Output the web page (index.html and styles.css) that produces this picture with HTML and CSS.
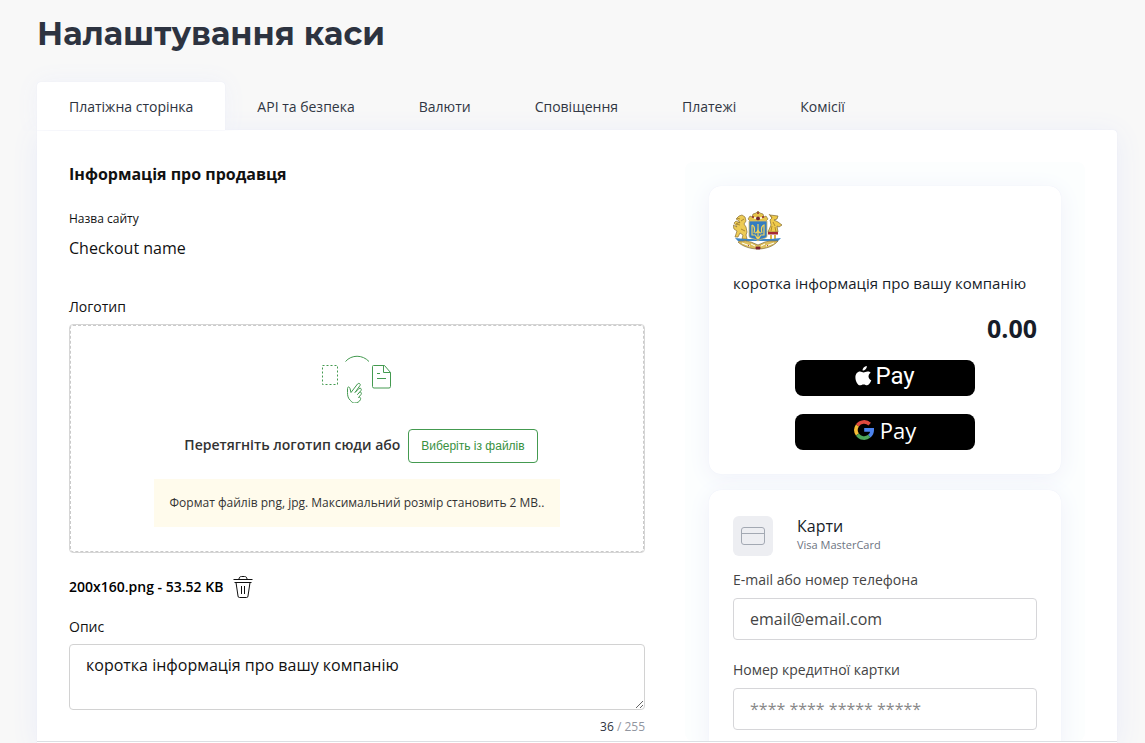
FILE: index.html
```html
<!DOCTYPE html>
<html lang="uk">
<head>
<meta charset="utf-8">
<meta name="viewport" content="width=device-width, initial-scale=1">
<title>Налаштування каси</title>
<link rel="stylesheet" href="styles.css">
</head>
<body>
<main class="page">
  <h1 class="page-title">Налаштування каси</h1>
  <nav class="tabs">
    <a class="tab tab-active" href="#page">Платіжна сторінка</a>
    <a class="tab" href="#api">API та безпека</a>
    <a class="tab" href="#currencies">Валюти</a>
    <a class="tab" href="#notifications">Сповіщення</a>
    <a class="tab" href="#payments">Платежі</a>
    <a class="tab" href="#fees">Комісії</a>
  </nav>
  <div class="panel">
    <div class="panel-body">
      <section class="settings">
        <h2 class="section-title">Інформація про продавця</h2>
        <div class="site-label">Назва сайту</div>
        <div class="site-name">Checkout name</div>
        <div class="field-label logo-label">Логотип</div>
        <div class="dropzone">
          <svg class="drop-icon" width="72" height="48" viewBox="0 0 72 48" fill="none" stroke="#449a50">
            <path d="M1.500 10.500h15v19h-15z" stroke-dasharray="2 2"/>
            <path d="M24.500 6.500c6-7 17-7 23.500 0"/>
            <path d="M52.500 10.500h11l6 7v14a1.500 1.500 0 0 1-1.500 1.500H53a1.500 1.500 0 0 1-1.500-1.500v-20a1 1 0 0 1 1-1z"/>
            <path d="M62.500 10.500v7h7M56 18.500h3M56 23.500h9"/>
            <path d="M29.500 45.500c-2.500-2-3-5-3-8v-4c0-2 2-2 2.500 0l1 4 6.500-8.500c1.500-1.500 3.500 0 2.500 1.500l-5 7 4-4c1.500-1 3 .5 2 2l-3.500 4 2-2c1.500-1 2.500.5 1.500 2l-2.500 3c1.500-1 2.500.5 2 2-1 2.500-3.500 3.500-6 3.500-1.500 0-3-1-4-2.500z"/>
          </svg>
          <div class="drop-row">
            <span class="drop-text">Перетягніть логотип сюди або</span>
            <button class="pick-button" type="button">Виберіть із файлів</button>
          </div>
          <p class="notice">Формат файлів png, jpg. Максимальний розмір становить 2 MB..</p>
        </div>
        <div class="file-row">
          <span>200x160.png - 53.52 KB</span>
          <button class="delete-button" type="button" aria-label="Видалити">
            <svg width="20" height="24" viewBox="0 0 20 24" fill="none" stroke="#111">
              <path d="M.5 4.500h19M6 4.500V4c0-1.500 1-2.500 2.500-2.500h3c1.500 0 2.500 1 2.500 2.500v.5M1.500 7.500h17M3 7.500L5 21a1.500 1.500 0 0 0 1.500 1.500h7A1.500 1.500 0 0 0 15 21l2-13.500M8.500 11v8M11.500 11v8"/>
            </svg>
          </button>
        </div>
        <label class="field-label" for="description">Опис</label>
        <textarea class="description" id="description">коротка інформація про вашу компанію</textarea>
        <div class="counter"><b>36</b> / 255</div>
      </section>

      <aside class="preview">
        <div class="card">
          <svg class="emblem" width="50" height="40" viewBox="0 0 50 40">
            <path d="M15 9l2-3 2 1 1-3 3-1 2-2 2 2 3 1 1 3 2-1 2 3-3 3H18z" fill="#e5c34a" stroke="#806a36" stroke-width=".6"/>
            <path d="M19 7h2M29 7h2M24 3h2" stroke="#8b2630" stroke-width="1.500"/>
            <path d="M21 8h8" stroke="#fff" stroke-width="1.500"/>
            <circle cx="25" cy="8.500" r="2" fill="#6f2430"/>
            <path d="M6 6l3-1 3 2 1 4-2 3 2 3 1 5-1 3 1 4H9l1-4-3-2-2 4H2l2-6-3-2-1-4 4 2-3-4 2-2 4 2-2-3-2-1z" fill="#edcb55" stroke="#89713a" stroke-width=".7"/>
            <path d="M4 8l3 1M7 12l-4 2 4 1M8 19l4 2M11 9l-3 2" stroke="#9b792b" fill="none" stroke-width=".8"/>
            <path d="M37 5l8 1-1 3-3 1 4 2 4 3-3 2-2-1 1 6H35l3-7-1-5 2-2z" fill="#efca4a" stroke="#806a36" stroke-width=".7"/>
            <path d="M36 4l3 4M40 12l2 4M39 16l-1 5M42 17l1 5" fill="none" stroke="#a07827" stroke-width=".8"/>
            <path d="M35 22h10v2.500H35z" fill="#a52934"/>
            <path d="M37 25h2v4h-2zM41 25h2v4h-2z" fill="#d9b546"/>
            <path d="M2 28l10 1h26l10-1-3 3H5z" fill="#3b86c8"/>
            <path d="M5 32c3-2 4 0 6-1s4 1 7 1l7 3 7-3 5-1 8 0c-4 5-12 8-20 8S9 36 5 32z" fill="#ddbf5b" stroke="#7f6b3e" stroke-width=".7"/>
            <path d="M9 33l8 3M41 33l-8 3M18 34l4 2M32 34l-4 2" stroke="#fff" fill="none"/>
            <path d="M23 37h4v2h-4zM15 35.500h1M34 35.500h1" fill="#7d2030" stroke="#7d2030" stroke-width=".8"/>
            <path d="M16 11h18v15c0 3-6 2-9 5-3-3-9-2-9-5z" fill="#347cc0" stroke="#d9bc65" stroke-width=".8"/>
            <path d="M19 15v10h3c1 0 1 3 3 4 2-1 2-4 3-4h3V15c-3 1-3 4-2 8M19 15c3 1 3 4 2 8M25 14v14M22 23c2 0 3-2 3-5 0 3 1 5 3 5" fill="none" stroke="#f2d25a" stroke-width="1.200"/>
          </svg>
          <p class="company">коротка інформація про вашу компанію</p>
          <div class="amount">0.00</div>
          <div class="pay-list">
            <button class="pay pay-apple" type="button">
              <svg width="17" height="20" viewBox="0 0 17 20" fill="#fff"><path d="M11.800 0c.2 2.500-2 4.700-4.200 4.600C7.400 2.300 9.500.2 11.800 0zM15.700 6.800c-3.200 2-2.700 6.200.6 7.500-.8 2.200-2.400 5-4.200 5-1.300 0-1.900-.8-3.500-.8s-2.300.8-3.500.8C2.600 19.300.4 14.900.4 11.400c0-3.600 2.200-5.900 4.600-5.900 1.500 0 2.600.9 3.600.9s2.300-1 4-1c1.300 0 2.500.5 3.100 1.400z"/></svg>
              <span>Pay</span>
            </button>
            <button class="pay pay-google" type="button">
              <svg width="20" height="20" viewBox="0 0 20 20" fill="none" stroke-width="3.600"><path d="M3.400 5.400A8.200 8.200 0 0 1 15.700 4.100" stroke="#e04a3f"/><path d="M3.400 14.600A8.200 8.200 0 0 1 3.400 5.400" stroke="#f5bd35"/><path d="M15.300 16.200A8.200 8.200 0 0 1 3.400 14.600" stroke="#4da65a"/><path d="M10.200 9.900h8a8.200 8.200 0 0 1-2.900 6.300" stroke="#4c83ee"/></svg>
              <span>Pay</span>
            </button>
          </div>
        </div>
        <div class="card">
          <div class="method">
            <span class="method-icon">
              <svg width="24" height="18" viewBox="0 0 24 18" fill="none" stroke="#a3a9b3"><rect x=".5" y=".5" width="23" height="17" rx="2.500"/><path d="M.5 6.500h23"/></svg>
            </span>
            <div class="method-text">
              <div class="method-name">Карти</div>
              <div class="method-brands">Visa MasterCard</div>
            </div>
          </div>
          <label class="pay-label" for="contact">E-mail або номер телефона</label>
          <input class="pay-input" id="contact" type="text" value="email@email.com">
          <label class="pay-label pay-label-next" for="number">Номер кредитної картки</label>
          <input class="pay-input" id="number" type="text" placeholder="**** **** ***** *****">
        </div>
      </aside>
    </div>
    <div class="panel-footer"></div>
  </div>
</main>
</body>
</html>
```
FILE: styles.css
```css
* {
  box-sizing: border-box;
}

body {
  margin: 0;
  background: #f8f8f8;
  color: #111;
  font-family: "Open Sans", "Noto Sans", sans-serif;
  font-size: 14px;
  line-height: 20px;
}

h1, h2, p {
  margin: 0;
}

.page {
  display: flex;
  flex-direction: column;
  height: 100vh;
  padding: 14px 28px 0 37px;
}

.page-title {
  margin-bottom: 28px;
  color: #2d3340;
  font-family: Montserrat, Inter, sans-serif;
  font-size: 32px;
  font-weight: 700;
  line-height: 40px;
}

.tabs {
  display: flex;
}

.tab {
  padding: 15px 32px 13px;
  border-radius: 4px 4px 0 0;
  color: #2d3340;
  text-decoration: none;
}

.tab-active {
  position: relative;
  z-index: 1;
  background: #fff;
  box-shadow: 0 0 24px #eff1f9, 0 0 1px #d9def0, 0 1px 0 #fff;
  clip-path: inset(-24px -24px -1px -37px);
}

.panel {
  display: flex;
  flex: 1;
  flex-direction: column;
  min-height: 0;
  border-radius: 0 4px 0 0;
  background: #fff;
  box-shadow: 0 4px 28px #e9ecf8, 0 0 1px #d9def0;
}

.panel-body {
  display: flex;
  flex: 1;
  gap: 40px;
  min-height: 0;
  padding: 32px 32px 0;
  overflow: hidden;
}

.panel-footer {
  flex: none;
  height: 2px;
  border-top: 1px solid #dcdfe3;
}

.settings {
  flex: 1;
}

.section-title {
  font-size: 16px;
  font-weight: 700;
  line-height: 24px;
}

.site-label {
  margin-top: 25px;
  font-size: 12px;
  line-height: 16px;
}

.site-name {
  margin-top: 9px;
  font-size: 16px;
  line-height: 24px;
}

.field-label {
  display: block;
  margin-bottom: 7px;
}

.logo-label {
  margin-top: 37px;
}

.dropzone {
  display: flex;
  flex-direction: column;
  align-items: center;
  padding: 30px 25px 25px;
  border: 1px solid #d6d6d6;
  border-radius: 4px;
  outline: 1px dashed #cacaca;
  outline-offset: -2px;
}

.drop-row {
  display: flex;
  align-items: center;
  gap: 8px;
  margin: 26px 0 16px;
  padding-left: 8px;
}

.drop-text {
  padding-bottom: 2px;
  color: #333;
  font-weight: 600;
}

.pick-button {
  height: 34px;
  padding: 0 12px;
  border: 1px solid #449a50;
  border-radius: 4px;
  background: #fff;
  color: #38913f;
  font-family: "Liberation Sans", Arial, sans-serif;
  font-size: 12px;
}

.notice {
  padding: 16px;
  background: #fffbec;
  color: #333;
  font-size: 12px;
  line-height: 16px;
}

.file-row {
  display: flex;
  align-items: center;
  gap: 10px;
  margin: 22px 0 18px;
  color: #000;
  font-weight: 600;
}

.delete-button {
  display: flex;
  padding: 0;
  border: 0;
  background: none;
}

.description {
  display: block;
  width: 100%;
  height: 66px;
  padding: 8px 16px;
  border: 1px solid #d2d2d2;
  border-radius: 4px;
  background: #fff;
  color: #111;
  font: 16px/24px "Open Sans", "Noto Sans", sans-serif;
}

.counter {
  margin-top: 9px;
  color: #9296a0;
  font-size: 12px;
  line-height: 16px;
  text-align: right;
}

.counter b {
  color: #2d3340;
  font-weight: 400;
}

.preview {
  display: flex;
  flex: 0 0 400px;
  flex-direction: column;
  gap: 16px;
  padding: 24px;
  border-radius: 8px;
  background: #fcfefe;
}

.card {
  flex: none;
  padding: 24px;
  border-radius: 12px;
  background: #fff;
  box-shadow: 0 4px 24px #eff1fa, 0 0 1px #e4e7f5;
}

.emblem {
  display: block;
}

.company {
  margin: 21px 0 17px;
  color: #171d29;
  font-size: 15px;
  line-height: 24px;
}

.amount {
  color: #171d29;
  font-size: 25px;
  font-weight: 700;
  line-height: 32px;
  text-align: right;
}

.pay-list {
  display: flex;
  flex-direction: column;
  align-items: center;
  gap: 18px;
  margin-top: 16px;
}

.pay {
  display: flex;
  align-items: center;
  justify-content: center;
  width: 180px;
  height: 36px;
  padding: 0 0 4px;
  border: 0;
  border-radius: 8px;
  background: #000;
  color: #fff;
  font-family: "Open Sans", sans-serif;
  font-size: 22px;
  line-height: 32px;
}

.pay-apple {
  gap: 3px;
  font-family: Roboto, sans-serif;
  font-size: 24px;
}

.pay-google {
  gap: 6px;
}

.method {
  display: flex;
  align-items: center;
  gap: 24px;
  margin: 2px 0 14px;
}

.method-icon {
  display: flex;
  align-items: center;
  justify-content: center;
  width: 40px;
  height: 40px;
  border-radius: 6px;
  background: #edeef2;
}

.method-text {
  padding-bottom: 2px;
}

.method-name {
  color: #171d29;
  font-size: 16px;
  line-height: 20px;
}

.method-brands {
  color: #6d7482;
  font-size: 11px;
  line-height: 18px;
}

.pay-label {
  display: block;
  margin-bottom: 8px;
  color: #444;
}

.pay-label-next {
  margin-top: 20px;
}

.pay-input {
  display: block;
  width: 100%;
  height: 42px;
  padding: 0 16px;
  border: 1px solid #d6d6d9;
  border-radius: 4px;
  background: #fff;
  color: #444;
  font: 16px/24px "Open Sans", "Noto Sans", sans-serif;
}

.pay-input::placeholder {
  color: #888;
}
```
